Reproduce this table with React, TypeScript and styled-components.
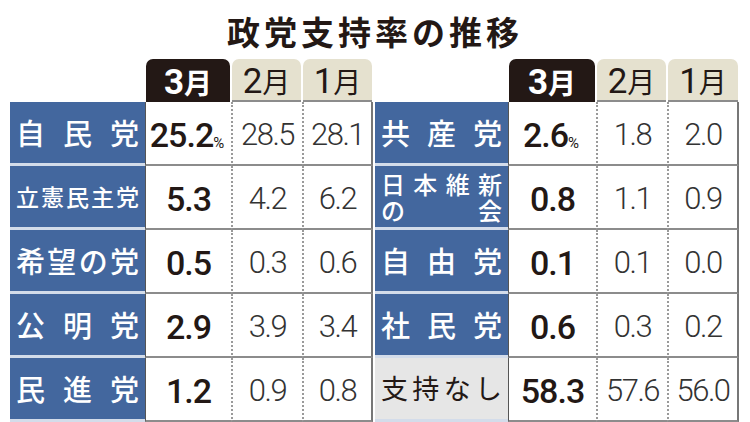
import React from "react";
import styled, { createGlobalStyle } from "styled-components";

const GlobalStyle = createGlobalStyle`
  html, body {
    margin: 0;
    padding: 0;
    background: #fff;
  }
  body {
    width: 750px;
    height: 422px;
    overflow: hidden;
    font-family: "Noto Sans CJK JP", "Noto Sans", sans-serif;
    color: #231815;
  }
`;

type Row = {
  name: string[];
  size: number;
  now: string;
  pct?: boolean;
  feb: string;
  jan: string;
  plain?: boolean;
};

const leftRows: Row[] = [
  { name: ["自民党"], size: 29, now: "25.2", pct: true, feb: "28.5", jan: "28.1" },
  { name: ["立憲民主党"], size: 23, now: "5.3", feb: "4.2", jan: "6.2" },
  { name: ["希望の党"], size: 29, now: "0.5", feb: "0.3", jan: "0.6" },
  { name: ["公明党"], size: 29, now: "2.9", feb: "3.9", jan: "3.4" },
  { name: ["民進党"], size: 29, now: "1.2", feb: "0.9", jan: "0.8" },
];

const rightRows: Row[] = [
  { name: ["共産党"], size: 29, now: "2.6", pct: true, feb: "1.8", jan: "2.0" },
  { name: ["日本維新", "の会"], size: 24, now: "0.8", feb: "1.1", jan: "0.9" },
  { name: ["自由党"], size: 29, now: "0.1", feb: "0.1", jan: "0.0" },
  { name: ["社民党"], size: 29, now: "0.6", feb: "0.3", jan: "0.2" },
  { name: ["支持なし"], size: 27, now: "58.3", feb: "57.6", jan: "56.0", plain: true },
];

const Page = styled.div`
  width: 750px;
  height: 422px;
  overflow: hidden;
`;

const Title = styled.h1`
  margin: 0;
  height: 59px;
  padding-top: 2px;
  box-sizing: border-box;
  display: flex;
  align-items: center;
  justify-content: center;
  font-size: 33px;
  font-weight: 700;
  letter-spacing: 4px;
  color: #231815;
`;

const Tables = styled.div`
  display: flex;
  gap: 2px;
  padding-left: 10px;
`;

const Panel = styled.div<{ $cols: string }>`
  display: grid;
  grid-template-columns: ${(p) => p.$cols};
  grid-template-rows: 43px repeat(5, 64px);
`;

const Tab = styled.div<{ $current?: boolean }>`
  margin: 0 1px;
  border-radius: 7px 7px 0 0;
  background: ${(p) => (p.$current ? "#231815" : "#e5e1cf")};
  color: ${(p) => (p.$current ? "#fff" : "#231815")};
  font-weight: ${(p) => (p.$current ? 700 : 400)};
  display: flex;
  align-items: center;
  justify-content: center;
  box-sizing: border-box;
  border-bottom: ${(p) => (p.$current ? "none" : "2px solid #8c8c8c")};
  padding-top: 3px;
`;

const TabNum = styled.span`
  font-family: Roboto, "Liberation Sans", sans-serif;
  font-size: 35px;
  line-height: 1;
`;

const TabMonth = styled.span`
  font-size: 28px;
  line-height: 1;
`;

const Label = styled.div<{ $plain?: boolean; $size: number }>`
  background: ${(p) => (p.$plain ? "#e6e6e6" : "#43679e")};
  color: ${(p) => (p.$plain ? "#231815" : "#fff")};
  font-size: ${(p) => p.$size}px;
  font-weight: ${(p) => (p.$plain ? 400 : 500)};
  border-bottom: 3px solid #d3dcea;
  box-sizing: border-box;
  padding: 0 6px;
  display: flex;
  flex-direction: column;
  justify-content: center;
  line-height: 1.05;
`;

const LabelLine = styled.div`
  display: flex;
  justify-content: space-between;
`;

const Cell = styled.div<{ $edge?: "first" | "last" }>`
  display: flex;
  align-items: center;
  justify-content: center;
  box-sizing: border-box;
  border-bottom: 2px solid #8c8c8c;
  border-left: ${(p) => (p.$edge === "first" ? "1px solid #555" : "2px dotted #9a9a9a")};
  border-right: ${(p) => (p.$edge === "last" ? "2px solid #777" : "none")};
  padding-top: 3px;
`;

const Now = styled.span`
  font-family: Roboto, "Liberation Sans", sans-serif;
  font-size: 34px;
  font-weight: 500;
  color: #231815;
  letter-spacing: -1px;
  position: relative;
`;

const Pct = styled.span`
  position: absolute;
  left: 100%;
  bottom: 4px;
  font-size: 15px;
  font-weight: 400;
  line-height: 1;
`;

const Past = styled.span`
  font-family: Roboto, "Liberation Sans", sans-serif;
  font-size: 31px;
  font-weight: 300;
  color: #333;
  letter-spacing: -1.5px;
`;

function PartyLabel({ row }: { row: Row }) {
  return (
    <Label $plain={row.plain} $size={row.size}>
      {row.name.map((line) => (
        <LabelLine key={line}>
          {line.split("").map((ch, i) => (
            <span key={i}>{ch}</span>
          ))}
        </LabelLine>
      ))}
    </Label>
  );
}

function Table({ rows, cols }: { rows: Row[]; cols: string }) {
  return (
    <Panel $cols={cols}>
      <div />
      <Tab $current>
        <TabNum>3</TabNum>
        <TabMonth>月</TabMonth>
      </Tab>
      <Tab>
        <TabNum>2</TabNum>
        <TabMonth>月</TabMonth>
      </Tab>
      <Tab>
        <TabNum>1</TabNum>
        <TabMonth>月</TabMonth>
      </Tab>
      {rows.map((r) => (
        <React.Fragment key={r.name.join("")}>
          <PartyLabel row={r} />
          <Cell $edge="first">
            <Now style={r.pct ? { marginLeft: -14 } : undefined}>
              {r.now}
              {r.pct && <Pct>%</Pct>}
            </Now>
          </Cell>
          <Cell>
            <Past>{r.feb}</Past>
          </Cell>
          <Cell $edge="last">
            <Past>{r.jan}</Past>
          </Cell>
        </React.Fragment>
      ))}
    </Panel>
  );
}

export default function App() {
  return (
    <Page>
      <GlobalStyle />
      <Title>政党支持率の推移</Title>
      <Tables>
        <Table rows={leftRows} cols="135px 86px 71px 71px" />
        <Table rows={rightRows} cols="133px 88px 71px 72px" />
      </Tables>
    </Page>
  );
}
